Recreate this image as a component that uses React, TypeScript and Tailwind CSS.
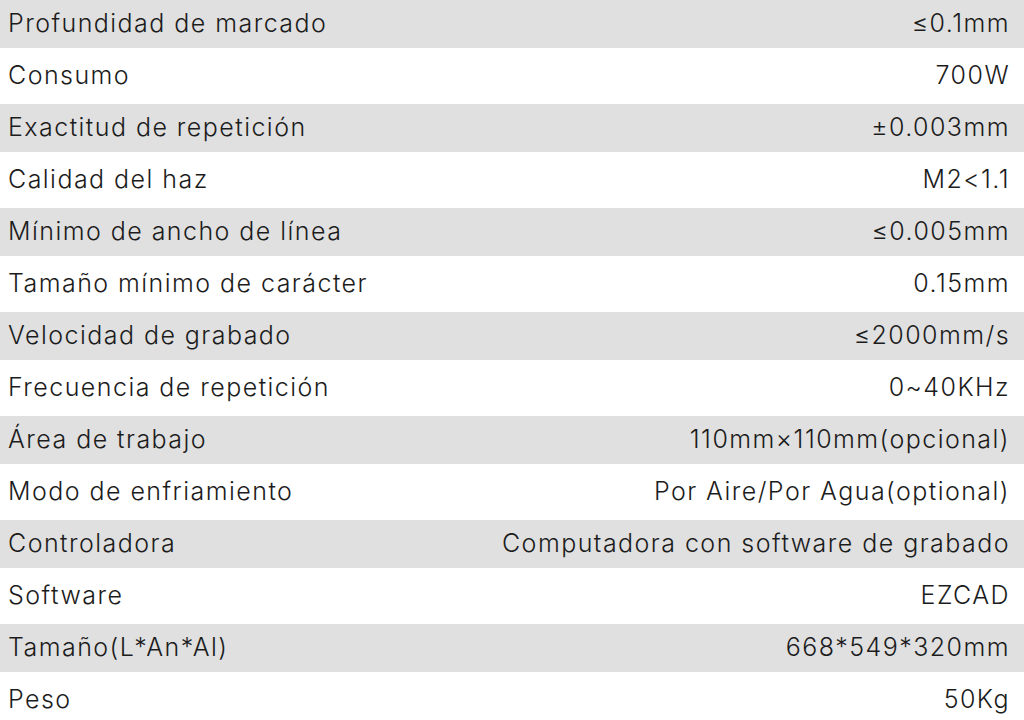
import React from 'react';

const specs: [string, string][] = [
  ['Profundidad de marcado', '≤0.1mm'],
  ['Consumo', '700W'],
  ['Exactitud de repetición', '±0.003mm'],
  ['Calidad del haz', 'M2<1.1'],
  ['Mínimo de ancho de línea', '≤0.005mm'],
  ['Tamaño mínimo de carácter', '0.15mm'],
  ['Velocidad de grabado', '≤2000mm/s'],
  ['Frecuencia de repetición', '0~40KHz'],
  ['Área de trabajo', '110mm×110mm(opcional)'],
  ['Modo de enfriamiento', 'Por Aire/Por Agua(optional)'],
  ['Controladora', 'Computadora con software de grabado'],
  ['Software', 'EZCAD'],
  ['Tamaño(L*An*Al)', '668*549*320mm'],
  ['Peso', '50Kg'],
];

export default function App() {
  return (
    <div className="w-[1024px] h-[720px] overflow-hidden bg-white text-[#1c1c1c] text-[25px] font-light tracking-[0.058em] font-['Inter',sans-serif]">
      {specs.map(([label, value], i) => (
        <div
          key={label}
          className={
            i % 2 === 0
              ? 'flex items-center justify-between h-[48px] bg-[#e0e0e0] pl-2 pr-[14px]'
              : 'flex items-center justify-between h-[56px] bg-white pl-2 pr-[14px]'
          }
        >
          <span>{label}</span>
          <span>{value}</span>
        </div>
      ))}
    </div>
  );
}
